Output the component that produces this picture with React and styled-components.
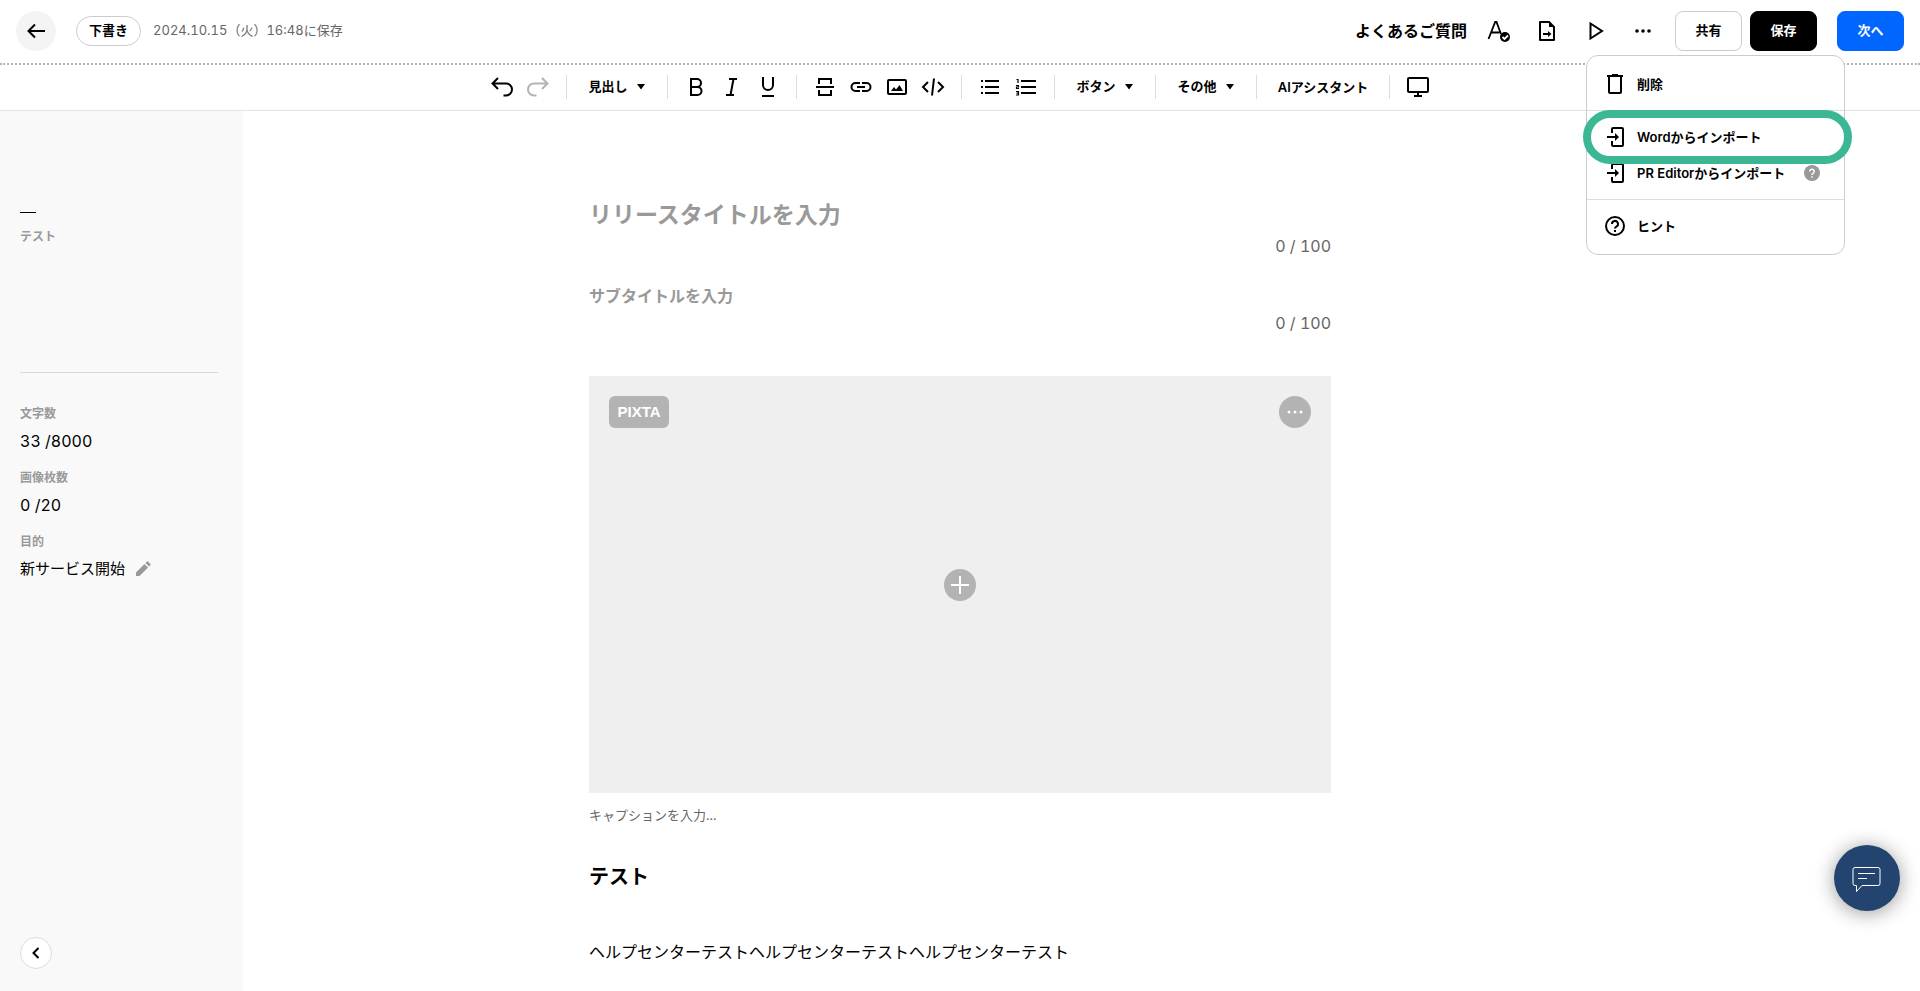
import { useState } from 'react';
import styled, { createGlobalStyle } from 'styled-components';

const GlobalStyle = createGlobalStyle`
  *, *::before, *::after {
    box-sizing: border-box;
  }

  body {
    margin: 0;
    background: #fff;
    color: #000;
    font-family: Inter, 'Noto Sans CJK JP', sans-serif;
    font-size: 13px;
    font-variant-numeric: tabular-nums;
    line-height: 20px;
  }

  button, input {
    font: inherit;
    color: inherit;
  }

  button {
    padding: 0;
    border: 0;
    background: none;
    cursor: pointer;
  }

  svg {
    display: block;
    flex: none;
  }
`;

const Page = styled.div`
  min-height: 100vh;
  display: flex;
  flex-direction: column;
`;

const Header = styled.header`
  height: 65px;
  padding: 11px 16px 12px;
  display: flex;
  align-items: center;
  border-bottom: 2px dotted #b3b3b3;
`;

const BackButton = styled.button`
  width: 40px;
  height: 40px;
  display: grid;
  place-items: center;
  border-radius: 50%;
  background: #f4f4f4;
`;

const Status = styled.span`
  height: 30px;
  margin: 0 12px 0 20px;
  padding: 0 12px 2px;
  display: flex;
  align-items: center;
  border: 1px solid #ccc;
  border-radius: 15px;
  font-weight: 700;
`;

const SavedAt = styled.span`
  padding-bottom: 2px;
  color: #666;
`;

const HeaderActions = styled.div`
  margin-left: auto;
  display: flex;
  align-items: center;
`;

const FaqLink = styled.a`
  margin-right: 8px;
  color: #000;
  font-size: 16px;
  font-weight: 700;
  text-decoration: none;
`;

const HeaderIcons = styled.div`
  margin-right: 8px;
  display: flex;
`;

const IconButton = styled.button`
  width: ${({ $wide }) => ($wide ? '48px' : '36px')};
  height: 36px;
  display: grid;
  place-items: center;
  color: ${({ disabled }) => (disabled ? '#b3b3b3' : '#000')};
`;

const MoreMenu = styled.div`
  position: relative;
`;

const Button = styled.button`
  width: 67px;
  height: 40px;
  margin-left: ${({ $gap }) => $gap || 0};
  padding-bottom: 2px;
  border: 1px solid ${({ $border }) => $border};
  border-radius: 8px;
  background: ${({ $bg }) => $bg};
  color: ${({ $color }) => $color};
  font-weight: 700;
`;

const Menu = styled.div`
  position: absolute;
  top: 42px;
  left: -33px;
  z-index: 2;
  width: 259px;
  padding: 2px 0;
  border: 1px solid #ccc;
  border-radius: 12px;
  background: #fff;
`;

const MenuGroup = styled.div`
  padding: 8px 0;

  & + & {
    border-top: 1px solid #ddd;
  }
`;

const MenuItem = styled.button`
  position: relative;
  width: 100%;
  height: 36px;
  padding: 0 24px 0 16px;
  display: flex;
  align-items: center;
  gap: 10px;
  font-weight: 600;
  white-space: nowrap;
`;

const HelpMark = styled.span`
  margin-left: auto;
`;

const Highlight = styled.span`
  position: absolute;
  inset: -9px -8px -9px -4px;
  z-index: 1;
  border: 8px solid #3bb795;
  border-radius: 27px;
  pointer-events: none;
`;

const Toolbar = styled.div`
  height: 46px;
  padding-bottom: 1px;
  display: flex;
  align-items: center;
  justify-content: center;
  border-bottom: 1px solid #e3e3e3;
`;

const ToolGroup = styled.div`
  height: 24px;
  display: flex;
  align-items: center;

  & + & {
    margin-left: 10px;
    padding-left: 10px;
    border-left: 1px solid #ddd;
  }
`;

const TextTool = styled.button`
  width: ${({ $wide }) => ($wide ? '112px' : '80px')};
  height: 36px;
  padding-bottom: ${({ $wide }) => ($wide ? 0 : '2px')};
  display: flex;
  align-items: center;
  justify-content: center;
  gap: 8px;
  font-weight: 600;
  white-space: nowrap;
`;

const Body = styled.div`
  flex: 1;
  display: grid;
  grid-template-columns: 243px minmax(0, 1fr) 243px;
`;

const Sidebar = styled.aside`
  padding: 100px 25px 22px 20px;
  display: flex;
  flex-direction: column;
  background: #f9f9f9;
`;

const Outline = styled.nav`
  height: 162px;
  padding-bottom: 36px;
  border-bottom: 1px solid #d9d9d9;
`;

const OutlineMark = styled.div`
  width: 16px;
  height: 1px;
  margin: 1px 0 13px;
  background: #000;
`;

const OutlineLink = styled.a`
  color: #999;
  font-size: 12px;
  font-weight: 700;
  text-decoration: none;
`;

const Stats = styled.dl`
  margin: 0;
  padding-top: 31px;
`;

const StatLabel = styled.dt`
  color: #999;
  font-size: 12px;
  font-weight: 700;
`;

const StatValue = styled.dd`
  height: 24px;
  margin: 5px 0 15px;
  display: flex;
  align-items: center;
  gap: 10px;
  font-size: ${({ $text }) => ($text ? '15px' : '16px')};
`;

const CollapseButton = styled.button`
  width: 32px;
  height: 32px;
  margin-top: auto;
  display: grid;
  place-items: center;
  border: 1px solid #ddd;
  border-radius: 50%;
  background: #fff;
`;

const Editor = styled.main`
  width: 100%;
  max-width: 742px;
  margin: 0 auto;
  padding-top: 84px;
`;

const Field = styled.input`
  display: block;
  width: 100%;
  height: ${({ $height }) => $height};
  padding: 0;
  border: 0;
  outline: 0;
  background: none;
  font-size: ${({ $size }) => $size};
  font-weight: ${({ $weight }) => $weight || 400};

  &::placeholder {
    color: ${({ $hint }) => $hint || '#999'};
    opacity: 1;
  }
`;

const Counter = styled.div`
  height: 24px;
  margin-bottom: ${({ $space }) => $space};
  color: #666;
  font-size: 16px;
  line-height: 24px;
  text-align: right;
`;

const ImageBox = styled.section`
  aspect-ratio: 16 / 9;
  padding: 20px;
  display: grid;
  grid-template-columns: 1fr 1fr;
  grid-template-rows: 32px 1fr 32px;
  background: #efefef;
`;

const PixtaButton = styled.button`
  width: 60px;
  height: 32px;
  border-radius: 6px;
  background: #b3b3b3;
  color: #fff;
  font-family: 'Liberation Sans', sans-serif;
  font-size: 15px;
  font-weight: 700;
`;

const RoundButton = styled.button`
  width: 32px;
  height: 32px;
  display: grid;
  place-items: center;
  justify-self: end;
  border-radius: 50%;
  background: #b3b3b3;
  color: #fff;
`;

const AddButton = styled(RoundButton)`
  grid-column: 1 / -1;
  place-self: center;
`;

const Heading = styled.h2`
  margin: 26px 0 0;
  font-size: 20px;
  font-weight: 700;
  line-height: 28px;
`;

const Paragraph = styled.p`
  margin: 47px 0 0;
  font-size: 16px;
  line-height: 28px;
`;

const ChatButton = styled.button`
  position: fixed;
  right: 20px;
  bottom: 80px;
  width: 66px;
  height: 66px;
  display: grid;
  place-items: center;
  border-radius: 50%;
  background: #23446f;
  box-shadow: 0 2px 20px rgba(0, 0, 0, 0.4);
`;

function Icon({ size = 24, width = 2, children, ...rest }) {
  return (
    <svg
      width={size}
      height={size}
      viewBox={`0 0 ${size} ${size}`}
      fill="none"
      stroke="currentColor"
      strokeWidth={width}
      aria-hidden="true"
      {...rest}
    >
      {children}
    </svg>
  );
}

const ArrowLeft = () => (
  <Icon><path d="M21 12H4.500M11 5.500L4.500 12l6.500 6.500" /></Icon>
);

const Undo = (props) => (
  <Icon {...props}><path d="M8 3L2.500 8.500 8 14M2.500 8.500H16a6 6 0 0 1 0 12h-2.500" /></Icon>
);

const Caret = () => (
  <Icon size={10}><path d="M1 3h8L5 8.500z" fill="currentColor" stroke="none" /></Icon>
);

const Dots = ({ r = 1.8 }) => (
  <Icon>
    <g fill="currentColor" stroke="none">
      <circle cx="6" cy="12" r={r} />
      <circle cx="12" cy="12" r={r} />
      <circle cx="18" cy="12" r={r} />
    </g>
  </Icon>
);

const Import = () => (
  <Icon>
    <path d="M9 8V4q0-1 1-1h9q1 0 1 1v16q0 1-1 1h-9q-1 0-1-1v-4M4 12h9" />
    <path d="M12 8l4 4-4 4z" fill="currentColor" stroke="none" />
  </Icon>
);

const headerIcons = [
  ['校正', (
    <Icon width={1.8}>
      <path d="M1.500 20L8.200 3h1.300l4.500 12M4.500 13.500h8" />
      <circle cx="18" cy="18" r="5" fill="currentColor" stroke="none" />
      <path d="M15.500 18l2 2 3.500-3.500" stroke="#fff" width="1.5" />
    </Icon>
  )],
  ['書き出し', (
    <Icon>
      <path d="M5 3h9l5 5v13H5z" strokeLinejoin="round" />
      <path d="M14 2v6h5z" fill="currentColor" stroke="none" />
      <path d="M8 15h6" />
      <path d="M13 12l3.500 3-3.500 3z" fill="currentColor" stroke="none" />
    </Icon>
  )],
  ['プレビュー', <Icon><path d="M7.500 4.500v15L19 12z" /></Icon>],
];

const styleTools = [
  ['太字', <Icon><path d="M7 4h6a4 4 0 0 1 0 8H7zM7 12h6.500a4 4 0 0 1 0 8H7z" /></Icon>],
  ['斜体', <Icon><path d="M9 4h8M6 20h8M13.500 4l-3 16" /></Icon>],
  ['下線', <Icon><path d="M7 2v8a5 5 0 0 0 10 0V2M6 21h12" /></Icon>],
];

const insertTools = [
  ['区切り', <Icon><path d="M3 12h18M6 9V4h12v5M6 15v5h12v-5" /></Icon>],
  ['リンク', <Icon><path d="M11 8H6.500a4 4 0 0 0 0 8H11M13 8h4.500a4 4 0 0 1 0 8H13M8 12h8" /></Icon>],
  ['画像', (
    <Icon>
      <rect x="3" y="5" width="18" height="14" rx="1" />
      <path d="M6 16l3-4 2 2.500 3.500-4.500L18 16z" fill="currentColor" stroke="none" />
    </Icon>
  )],
  ['埋め込み', <Icon><path d="M7 7l-5 5 5 5M17 7l5 5-5 5M13 3.500l-2 17" /></Icon>],
];

const listTools = [
  ['箇条書き', <Icon><path d="M7 6h14M7 12h14M7 18h14M3 6h2M3 12h2M3 18h2" /></Icon>],
  ['番号付きリスト', (
    <Icon>
      <path d="M7 6h15M7 12h15M7 18h15" />
      <path d="M2.500 4.500H4V8M2 10.500h2.500v1.500H2.500v1.500h2.500M2 16.500h2.500v3.500H2M2.500 18.200h2" strokeWidth="1.2" />
    </Icon>
  )],
];

function Tools({ items }) {
  return items.map(([label, icon]) => (
    <IconButton key={label} type="button" aria-label={label}>{icon}</IconButton>
  ));
}

function HeaderMenu() {
  return (
    <Menu>
      <MenuGroup>
        <MenuItem type="button">
          <Icon><path d="M6 5v15q0 1 1 1h10q1 0 1-1V5M4 4h16M9 3h6" /></Icon>
          削除
        </MenuItem>
      </MenuGroup>
      <MenuGroup>
        <MenuItem type="button">
          <Import />
          Wordからインポート
          <Highlight />
        </MenuItem>
        <MenuItem type="button">
          <Import />
          PR Editorからインポート
          <HelpMark>
            <Icon size={16} width={1.5}>
              <circle cx="8" cy="8" r="8" fill="#999" stroke="none" />
              <path d="M5.800 6.500a2.200 2.200 0 1 1 3.300 1.800Q8 9 8 10M8 11.200v1.500" stroke="#fff" />
            </Icon>
          </HelpMark>
        </MenuItem>
      </MenuGroup>
      <MenuGroup>
        <MenuItem type="button">
          <Icon>
            <circle cx="12" cy="12" r="9" />
            <path d="M9 10a3 3 0 1 1 4.500 2.500Q12 13.500 12 14.500M12 16v2" />
          </Icon>
          ヒント
        </MenuItem>
      </MenuGroup>
    </Menu>
  );
}

export default function App() {
  const [menuOpen, setMenuOpen] = useState(true);

  return (
    <>
      <GlobalStyle />
      <Page>
        <Header>
          <BackButton type="button" aria-label="戻る"><ArrowLeft /></BackButton>
          <Status>下書き</Status>
          <SavedAt>2024.10.15（火）16:48に保存</SavedAt>
          <HeaderActions>
            <FaqLink href="#faq">よくあるご質問</FaqLink>
            <HeaderIcons>
              {headerIcons.map(([label, icon]) => (
                <IconButton key={label} type="button" aria-label={label} $wide>{icon}</IconButton>
              ))}
              <MoreMenu>
                <IconButton type="button" aria-label="その他の操作" $wide onClick={() => setMenuOpen(!menuOpen)}>
                  <Dots />
                </IconButton>
                {menuOpen && <HeaderMenu />}
              </MoreMenu>
            </HeaderIcons>
            <Button type="button" $bg="#fff" $color="#000" $border="#ccc">共有</Button>
            <Button type="button" $bg="#000" $color="#fff" $border="#000" $gap="8px">保存</Button>
            <Button type="button" $bg="#0066ff" $color="#fff" $border="#0066ff" $gap="20px">次へ</Button>
          </HeaderActions>
        </Header>

        <Toolbar>
          <ToolGroup>
            <IconButton type="button" aria-label="元に戻す"><Undo /></IconButton>
            <IconButton type="button" aria-label="やり直す" disabled><Undo transform="scale(-1 1)" /></IconButton>
          </ToolGroup>
          <ToolGroup><TextTool type="button">見出し<Caret /></TextTool></ToolGroup>
          <ToolGroup><Tools items={styleTools} /></ToolGroup>
          <ToolGroup><Tools items={insertTools} /></ToolGroup>
          <ToolGroup><Tools items={listTools} /></ToolGroup>
          <ToolGroup><TextTool type="button">ボタン<Caret /></TextTool></ToolGroup>
          <ToolGroup><TextTool type="button">その他<Caret /></TextTool></ToolGroup>
          <ToolGroup><TextTool type="button" $wide>AIアシスタント</TextTool></ToolGroup>
          <ToolGroup>
            <IconButton type="button" aria-label="表示">
              <Icon><rect x="2" y="3" width="20" height="14" rx="1" /><path d="M12 17v4M8 21h8" /></Icon>
            </IconButton>
          </ToolGroup>
        </Toolbar>

        <Body>
          <Sidebar>
            <Outline>
              <OutlineMark />
              <OutlineLink href="#heading">テスト</OutlineLink>
            </Outline>
            <Stats>
              <StatLabel>文字数</StatLabel>
              <StatValue>33 /8000</StatValue>
              <StatLabel>画像枚数</StatLabel>
              <StatValue>0 /20</StatValue>
              <StatLabel>目的</StatLabel>
              <StatValue $text>
                新サービス開始
                <button type="button" aria-label="目的を編集">
                  <Icon size={16}>
                    <path d="M1 15v-3.500L9.500 3l3.500 3.500L4.500 15zM10.500 2L12 .500q.500-.500 1 0L15.500 3q.500.500 0 1L14 5.500z" fill="#999" stroke="none" />
                  </Icon>
                </button>
              </StatValue>
            </Stats>
            <CollapseButton type="button" aria-label="サイドバーを閉じる">
              <Icon size={16}><path d="M10.500 3l-5 5 5 5" /></Icon>
            </CollapseButton>
          </Sidebar>

          <Editor>
            <Field aria-label="タイトル" placeholder="リリースタイトルを入力" $height="39px" $size="23px" $weight={700} />
            <Counter $space="22px">0 / 100</Counter>
            <Field aria-label="サブタイトル" placeholder="サブタイトルを入力" $height="31px" $size="16px" $weight={700} />
            <Counter $space="41px">0 / 100</Counter>
            <ImageBox>
              <PixtaButton type="button">PIXTA</PixtaButton>
              <RoundButton type="button" aria-label="画像メニュー"><Dots r={1.5} /></RoundButton>
              <AddButton type="button" aria-label="画像を追加">
                <Icon><path d="M12 3v18M3 12h18" /></Icon>
              </AddButton>
            </ImageBox>
            <Field aria-label="キャプション" placeholder="キャプションを入力..." $height="44px" $size="13px" $hint="#666" />
            <Heading id="heading">テスト</Heading>
            <Paragraph>ヘルプセンターテストヘルプセンターテストヘルプセンターテスト</Paragraph>
          </Editor>
        </Body>
      </Page>

      <ChatButton type="button" aria-label="チャット">
        <Icon size={32} width={1} stroke="#fff">
          <path d="M4 5.500h23q2 0 2 2v14q0 2-2 2H11l-5.500 6v-6H4q-2 0-2-2v-14q0-2 2-2z" />
          <path d="M7 11.500h17M7 16.500h9" />
        </Icon>
      </ChatButton>
    </>
  );
}
